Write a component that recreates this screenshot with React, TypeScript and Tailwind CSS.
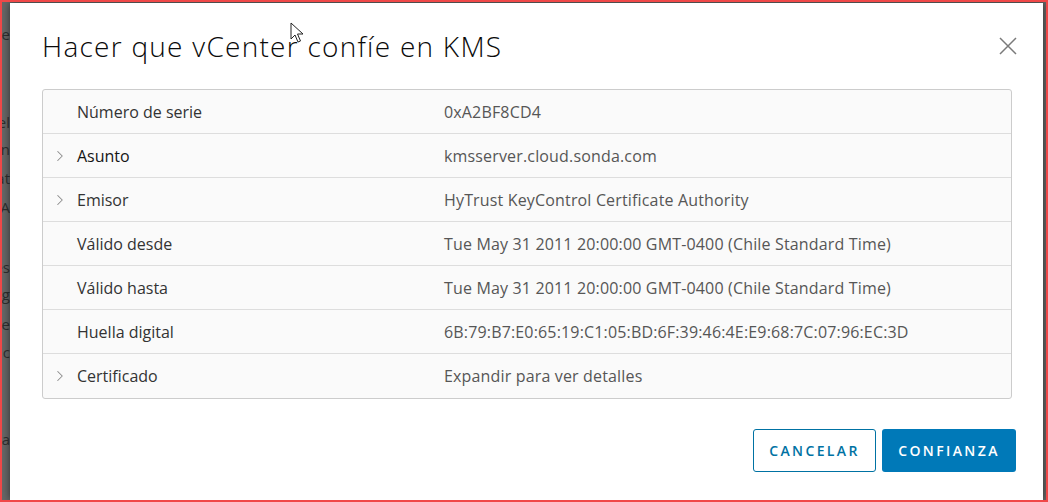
import { ChevronRight } from "lucide-react";

const rows = [
  { label: "Número de serie", value: "0xA2BF8CD4", expandable: false },
  { label: "Asunto", value: "kmsserver.cloud.sonda.com", expandable: true },
  { label: "Emisor", value: "HyTrust KeyControl Certificate Authority", expandable: true },
  { label: "Válido desde", value: "Tue May 31 2011 20:00:00 GMT-0400 (Chile Standard Time)", expandable: false },
  { label: "Válido hasta", value: "Tue May 31 2011 20:00:00 GMT-0400 (Chile Standard Time)", expandable: false },
  { label: "Huella digital", value: "6B:79:B7:E0:65:19:C1:05:BD:6F:39:46:4E:E9:68:7C:07:96:EC:3D", expandable: false },
  { label: "Certificado", value: "Expandir para ver detalles", expandable: true },
];

// fragments of the page behind the dimmed backdrop
const behind = [
  { top: 22, text: "Nombre" },
  { top: 110, text: "Panel" },
  { top: 137, text: "Función" },
  { top: 166, text: "Estat" },
  { top: 195, text: "KMS A" },
  { top: 255, text: "Claves" },
  { top: 282, text: "Catálog" },
  { top: 312, text: "Nube" },
  { top: 340, text: "Conc" },
  { top: 427, text: "Nueva" },
];

export default function App() {
  return (
    <div
      className="relative w-[1048px] h-[502px] overflow-hidden border-2 border-[#f04848] bg-[#676767]"
      style={{ fontFamily: '"Open Sans", "Liberation Sans", sans-serif' }}
    >
      <div className="absolute left-0 top-0 w-[8px] h-full overflow-hidden">
        {behind.map((b) => (
          <div
            key={b.top}
            className="absolute right-0 text-[15px] leading-[20px] text-[#2f2f2f] whitespace-nowrap"
            style={{ top: b.top }}
          >
            {b.text}
          </div>
        ))}
      </div>

      <div className="absolute left-[8px] top-[1px] w-[1033px] h-[497px] bg-white shadow-[0_0_8px_rgba(0,0,0,0.55)] pl-[32px] pr-[27px] pt-[27px] flex flex-col">
        <div className="flex items-center justify-between h-[32px]">
          <h1 className="text-[28px] leading-[32px] font-light tracking-[0.045em] text-[#0a0a0a]">
            Hacer que vCenter confíe en KMS
          </h1>
          <svg width="18" height="18" viewBox="0 0 18 18" className="mr-[-1px]">
            <path d="M1 1 L17 17 M17 1 L1 17" stroke="#7a7a7a" strokeWidth="1.5" />
          </svg>
        </div>

        <div className="mt-[27px] mr-[4px] border border-[#cccccc] rounded-[3px] bg-[#fafafa]">
          {rows.map((r, i) => (
            <div
              key={r.label}
              className={`flex items-center h-[44px] text-[16px] ${i < rows.length - 1 ? "border-b border-[#dddddd]" : ""}`}
            >
              <div className="w-[34px] pl-[8px] flex items-center">
                {r.expandable && <ChevronRight className="w-[18px] h-[18px] text-[#8c8c8c]" strokeWidth={1.4} />}
              </div>
              <div className={`w-[367px] ${i === 1 ? "text-[#151515]" : "text-[#333333]"}`}>{r.label}</div>
              <div className="text-[#565656] tracking-[0.01em]">{r.value}</div>
            </div>
          ))}
        </div>

        <div className="mt-auto mb-[28px] flex justify-end gap-[6px]">
          <button className="w-[123px] h-[43px] border border-[#0072a3] rounded-[3px] bg-white text-[#0072a3] text-[14px] font-semibold tracking-[0.17em]">
            CANCELAR
          </button>
          <button className="w-[134px] h-[43px] rounded-[3px] bg-[#0079b8] text-white text-[14px] font-semibold tracking-[0.17em]">
            CONFIANZA
          </button>
        </div>
      </div>

      <svg className="absolute left-[288px] top-[20px]" width="14" height="22" viewBox="0 0 14 22">
        <path d="M1 1 L1 17 L5 13 L8 20 L10.5 19 L7.5 12 L13 12 Z" fill="#fff" stroke="#222" strokeWidth="1" strokeLinejoin="round" />
      </svg>
    </div>
  );
}
